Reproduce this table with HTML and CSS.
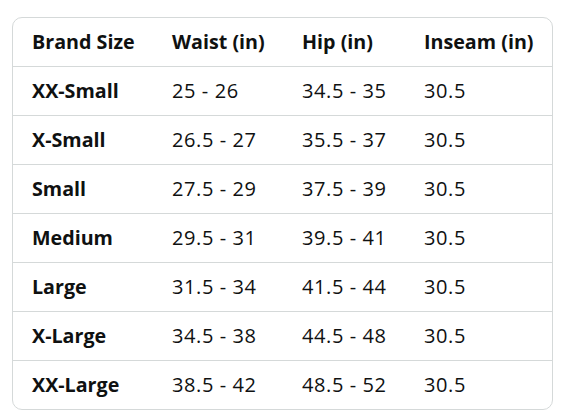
FILE: index.html
```html
<!DOCTYPE html>
<html>
<head>
<meta charset="utf-8">
<link rel="stylesheet" href="styles.css">
</head>
<body>
<div class="card">
  <table class="chart">
    <colgroup>
      <col class="c1"><col class="c2"><col class="c3"><col class="c4">
    </colgroup>
    <thead>
      <tr><th>Brand Size</th><th>Waist (in)</th><th>Hip (in)</th><th>Inseam (in)</th></tr>
    </thead>
    <tbody>
      <tr><th>XX-Small</th><td>25 - 26</td><td>34.5 - 35</td><td>30.5</td></tr>
      <tr><th>X-Small</th><td>26.5 - 27</td><td>35.5 - 37</td><td>30.5</td></tr>
      <tr><th>Small</th><td>27.5 - 29</td><td>37.5 - 39</td><td>30.5</td></tr>
      <tr><th>Medium</th><td>29.5 - 31</td><td>39.5 - 41</td><td>30.5</td></tr>
      <tr><th>Large</th><td>31.5 - 34</td><td>41.5 - 44</td><td>30.5</td></tr>
      <tr><th>X-Large</th><td>34.5 - 38</td><td>44.5 - 48</td><td>30.5</td></tr>
      <tr><th>XX-Large</th><td>38.5 - 42</td><td>48.5 - 52</td><td>30.5</td></tr>
    </tbody>
  </table>
</div>
</body>
</html>
```
FILE: styles.css
```css
html, body {
  margin: 0;
  padding: 0;
  background: #ffffff;
}
body {
  padding: 17px 0 0 12px;
  font-family: "Open Sans", "Noto Sans", sans-serif;
  color: #0f1111;
}
.card {
  width: 539px;
  border: 1px solid #d5d9d9;
  border-radius: 10px;
  overflow: hidden;
}
.chart {
  width: 100%;
  border-collapse: collapse;
  table-layout: fixed;
  font-size: 20px;
  line-height: 24px;
}
.c1 { width: 159px; }
.c2 { width: 130px; }
.c3 { width: 122px; }
.c4 { width: 128px; }
.chart th, .chart td {
  height: 48px;
  padding: 0;
  text-align: left;
  vertical-align: middle;
  white-space: nowrap;
}
.chart th { font-weight: 700; font-size: 19.7px; }
.chart td { font-weight: 400; letter-spacing: 0.6px; }
.chart th:first-child { padding-left: 19px; }
.chart tbody tr th, .chart tbody tr td {
  border-top: 1px solid #d5d9d9;
}
```
